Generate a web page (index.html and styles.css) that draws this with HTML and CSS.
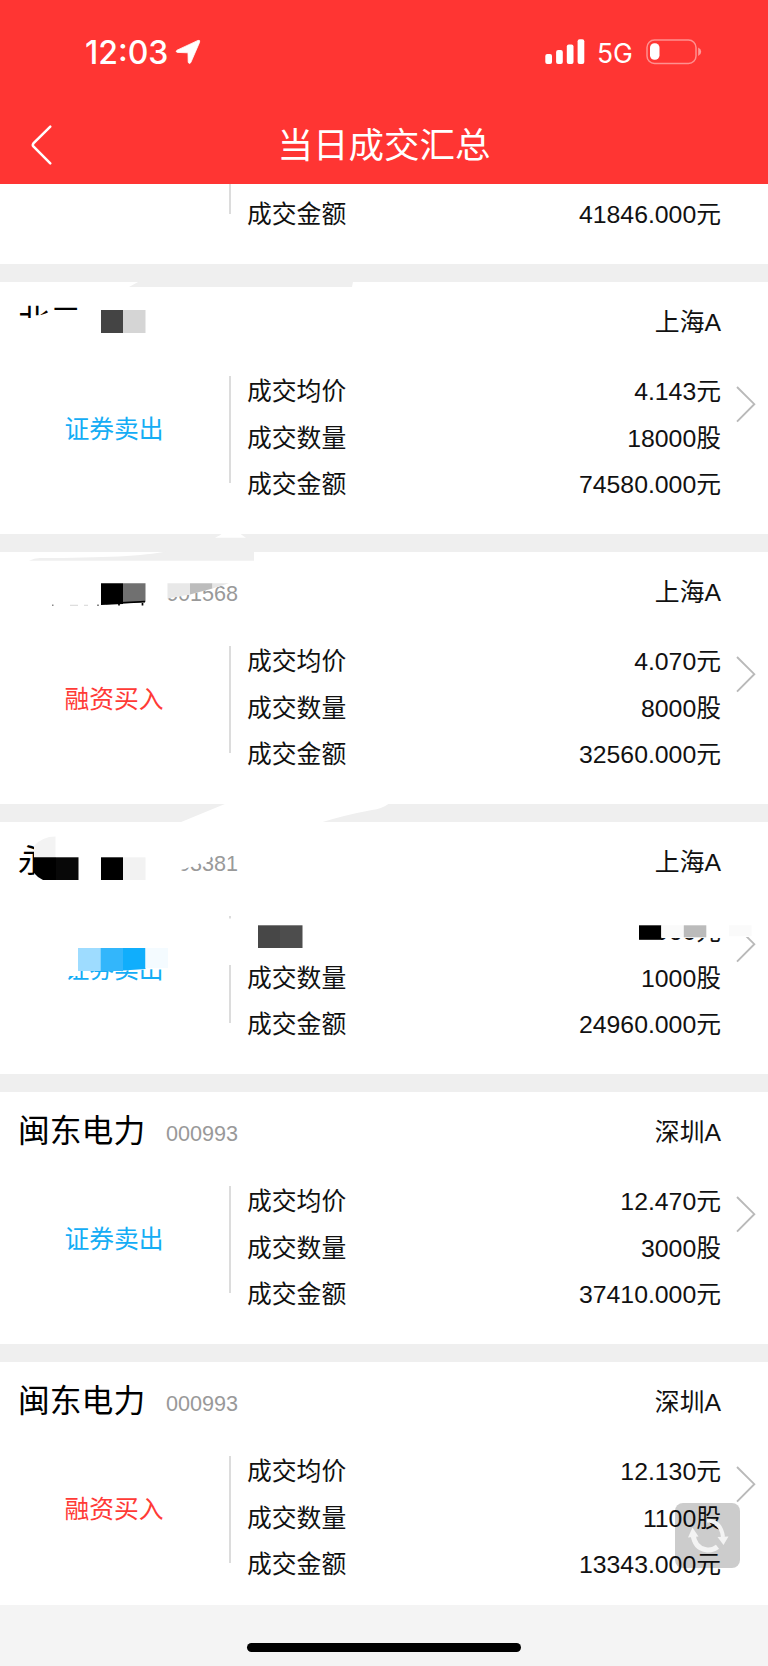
FILE: index.html
```html
<!DOCTYPE html>
<html lang="zh-CN">

<head>
  <meta charset="UTF-8">
  <meta name="viewport" content="width=device-width, initial-scale=1.0">
  <title>当日成交汇总</title>
  <link rel="stylesheet" href="styles.css">
</head>

<body>
  <section class="app">
    <header class="header">
      <div class="status-bar">
        <span class="time">12:03</span>
        <svg class="location" width="26" height="26" viewBox="0 0 26 26">
          <path d="M2 11.2 L23 1.4 Q25.4 .8 24.6 3.2 L15.8 23.6 Q14.4 25.6 13.2 23.4 L13 13.8 L2.4 13.4 Q0 12.6 2 11.2Z" fill="#fff" stroke="#fff" stroke-width=".8" stroke-linejoin="round"/>
        </svg>
        <svg class="signal" width="40" height="26" viewBox="0 0 40 26" fill="#fff">
          <rect x="0.3" y="15" width="6.7" height="10" rx="2"/>
          <rect x="11.1" y="11" width="6.7" height="14" rx="2"/>
          <rect x="21.8" y="5.5" width="6.7" height="19.5" rx="2"/>
          <rect x="32.6" y="0.2" width="6.7" height="24.8" rx="2"/>
        </svg>
        <span class="network">5G</span>
        <svg class="battery" width="56" height="26" viewBox="0 0 56 26">
          <rect x="1" y="1" width="49" height="23.5" rx="7.5" fill="none" stroke="#fff" stroke-opacity=".45" stroke-width="1.5"/>
          <rect x="4" y="4.3" width="9.5" height="16.4" rx="4.5" fill="#fff"/>
          <path d="M52.2 8.5 Q55.2 10 55.2 12.8 Q55.2 15.5 52.2 17Z" fill="#fff" fill-opacity=".5"/>
        </svg>
      </div>
      <div class="nav-bar">
        <svg class="back" width="24" height="42" viewBox="0 0 24 42">
          <path d="M20.3 2.6 L3.4 19.4 Q2.2 21 3.4 22.4 L20.3 39.4" fill="none" stroke="#fff" stroke-width="2.5" stroke-linecap="round"/>
        </svg>
        <h1>当日成交汇总</h1>
      </div>
    </header>

    <main class="list">
      <article class="card scrolled">
        <div class="card-body">
          <div class="action"></div>
          <dl class="details">
            <div class="row"><dt>成交金额</dt><dd>41846.000元</dd></div>
          </dl>
        </div>
      </article>

      <article class="card">
        <div class="card-head">
          <span class="name">北元</span>
          <span class="market">上海A</span>
        </div>
        <div class="card-body">
          <div class="action sell">证券卖出</div>
          <dl class="details">
            <div class="row"><dt>成交均价</dt><dd>4.143元</dd></div>
            <div class="row"><dt>成交数量</dt><dd>18000股</dd></div>
            <div class="row"><dt>成交金额</dt><dd>74580.000元</dd></div>
          </dl>
          <svg class="arrow" width="20" height="37" viewBox="0 0 20 37"><path d="M1 1 L18.3 18.2 L1 35.6"/></svg>
        </div>
        <svg class="mosaic" width="768" height="270" viewBox="0 264 768 270">
          <path d="M129 287 L139 281.5 H353 L352 287Z" fill="#efefef"/>
          <path d="M16 298 H98 V305.5 H16Z M16 318 H31 L33 315.5 L41 315 L47 313 L50 311 H98 V345 H16Z" fill="#fff"/>
          <rect x="101" y="310" width="22" height="23" fill="#444"/>
          <rect x="123" y="310" width="22.5" height="23" fill="#d5d5d5"/>
        </svg>
      </article>

      <article class="card">
        <div class="card-head">
          <span class="name"></span>
          <span class="code">601568</span>
          <span class="market">上海A</span>
        </div>
        <div class="card-body">
          <div class="action buy">融资买入</div>
          <dl class="details">
            <div class="row"><dt>成交均价</dt><dd>4.070元</dd></div>
            <div class="row"><dt>成交数量</dt><dd>8000股</dd></div>
            <div class="row"><dt>成交金额</dt><dd>32560.000元</dd></div>
          </dl>
          <svg class="arrow" width="20" height="37" viewBox="0 0 20 37"><path d="M1 1 L18.3 18.2 L1 35.6"/></svg>
        </div>
        <svg class="mosaic" width="768" height="270" viewBox="0 534 768 270">
          <path d="M215 537.7 Q221 535 222 533.5 H240 Q243 536 246 537.7Z" fill="#fff"/>
          <path d="M29 560.7 Q34 558 40 558 Q135 558 166 551.5 H254 V560.7Z" fill="#efefef"/>
          <path d="M101 583.3 H123 V604 L101 605Z" fill="#000"/>
          <path d="M123 583.3 H145.5 V602 L123 603.5Z" fill="#707070"/>
          <path d="M106 603.5 L145 601.7 M119 603 V605.5 M142.5 603 V605.5" stroke="#000" stroke-width="1.7"/>
          <path d="M52 604.5 H53.5 V606 H52Z M97 604.5 H99 V606 H97Z" fill="#888"/>
          <path d="M70 605.3 H78 M84 605.3 H88" stroke="#ccc" stroke-width=".8"/>
          <path d="M164 580 H230 V583.3 L212.5 588.5 L190 594.5 L167 598.5 H164Z" fill="#fff"/>
          <path d="M167.5 583.3 H190 V594.5 L167.5 598.5Z" fill="#e8e8e8"/>
          <path d="M190 583.3 H212.5 V588.5 L190 594.5Z" fill="#bcbcbc"/>
          <path d="M212.5 583.3 H229 L212.5 588.5Z" fill="#e6e6e6"/>
        </svg>
      </article>

      <article class="card">
        <div class="card-head">
          <span class="name">永</span>
          <span class="code">603381</span>
          <span class="market">上海A</span>
        </div>
        <div class="card-body">
          <div class="action sell">证券卖出</div>
          <dl class="details">
            <div class="row"><dt></dt><dd>24.960元</dd></div>
            <div class="row"><dt>成交数量</dt><dd>1000股</dd></div>
            <div class="row"><dt>成交金额</dt><dd>24960.000元</dd></div>
          </dl>
          <svg class="arrow" width="20" height="37" viewBox="0 0 20 37"><path d="M1 1 L18.3 18.2 L1 35.6"/></svg>
        </div>
        <svg class="mosaic" width="768" height="270" viewBox="0 804 768 270">
          <path d="M180 822.5 L226 803.5 H389 Q382 809 372 810 Q345 815 321 822.5Z" fill="#fff"/>
          <path d="M34 842 L50 835 H60 V885 H44 L34 874Z" fill="#fff"/>
          <path d="M34 857 V846 Q42 836.5 55.5 836.5 V857Z" fill="#f3f3f3"/>
          <path d="M34 857.3 H56 V880 H43 Q37 877 34 873Z" fill="#000"/>
          <rect x="56" y="857.3" width="22.5" height="22.7" fill="#080808"/>
          <rect x="101" y="857.3" width="22" height="22.7" fill="#000"/>
          <rect x="123" y="857.3" width="22.5" height="22.7" fill="#f2f2f2"/>
          <path d="M162 850 H214 L210 859 L206 863 L201 862 L196 866 L190 867 L181 870 V875 H162Z" fill="#fff"/>
          <rect x="227" y="918.5" width="6" height="46.5" fill="#fff"/>
          <rect x="258" y="925.3" width="22" height="22.7" fill="#474747"/>
          <rect x="280" y="925.3" width="22.5" height="22.7" fill="#4d4d4d"/>
          <path d="M60 950 H168 V968.5 L125 970.5 L78 971 V976 H60Z" fill="#fff"/>
          <rect x="78" y="948" width="22.5" height="23" fill="#9edcff"/>
          <rect x="100.5" y="948" width="22.5" height="23" fill="#33b6fb"/>
          <path d="M123 948 H145.5 V969 L123 970.5Z" fill="#10aefc"/>
          <rect x="145.5" y="948" width="22.5" height="20" fill="#f4fbff"/>
          <path d="M612 915 H758 V937 H722 V938 H661 V940 H639 V948 H612Z" fill="#fff"/>
          <rect x="639" y="925.3" width="22.3" height="14.5" fill="#000"/>
          <rect x="661.3" y="925.3" width="22.5" height="12" fill="#fafafa"/>
          <rect x="683.8" y="925.3" width="22.5" height="12" fill="#bbb"/>
          <rect x="729" y="925.3" width="22.5" height="11" fill="#fafafa"/>
        </svg>
      </article>

      <article class="card">
        <div class="card-head">
          <span class="name">闽东电力</span>
          <span class="code">000993</span>
          <span class="market">深圳A</span>
        </div>
        <div class="card-body">
          <div class="action sell">证券卖出</div>
          <dl class="details">
            <div class="row"><dt>成交均价</dt><dd>12.470元</dd></div>
            <div class="row"><dt>成交数量</dt><dd>3000股</dd></div>
            <div class="row"><dt>成交金额</dt><dd>37410.000元</dd></div>
          </dl>
          <svg class="arrow" width="20" height="37" viewBox="0 0 20 37"><path d="M1 1 L18.3 18.2 L1 35.6"/></svg>
        </div>
      </article>

      <article class="card">
        <div class="card-head">
          <span class="name">闽东电力</span>
          <span class="code">000993</span>
          <span class="market">深圳A</span>
        </div>
        <div class="card-body">
          <div class="action buy">融资买入</div>
          <dl class="details">
            <div class="row"><dt>成交均价</dt><dd>12.130元</dd></div>
            <div class="row"><dt>成交数量</dt><dd>1100股</dd></div>
            <div class="row"><dt>成交金额</dt><dd>13343.000元</dd></div>
          </dl>
          <svg class="arrow" width="20" height="37" viewBox="0 0 20 37"><path d="M1 1 L18.3 18.2 L1 35.6"/></svg>
        </div>
      </article>
    </main>

    <button type="button" class="refresh" aria-label="刷新">
      <svg width="65" height="65" viewBox="0 0 65 65">
        <g fill="none" stroke="#f3f3f3">
          <path d="M18 31 Q19.5 45 31 46.8 Q37 48 42.5 43.8" stroke-width="5"/>
          <path d="M32 17.5 Q46 18 48 34" stroke-width="4"/>
        </g>
        <path d="M17.5 24.5 L23.5 33.5 L13 34.5Z M42.5 34 L53.5 33.5 L48.5 42Z" fill="#f3f3f3"/>
      </svg>
    </button>

    <footer class="footer">
      <div class="home-indicator"></div>
    </footer>
  </section>
</body>

</html>
```
FILE: styles.css
```css
body {
  margin: 0;
  background: #f4f4f4;
  color: #111;
  font-family: "Liberation Sans", "Noto Sans CJK SC", sans-serif;
}

.app {
  display: flex;
  flex-direction: column;
  width: 768px;
  height: 1666px;
  position: relative;
  overflow: hidden;
}

.header {
  height: 184px;
  background: #ff3533;
  color: #fff;
}

.status-bar {
  display: flex;
  align-items: center;
  height: 104px;
  padding: 0 66px 0 85px;
  box-sizing: border-box;
  font-family: Inter, sans-serif;
}

.time {
  font-size: 32px;
  font-weight: 500;
  width: 90px;
  white-space: nowrap;
}

.signal {
  margin-left: auto;
}

.network {
  font-size: 26.5px;
  font-weight: 400;
  margin: 2px 0 0 12px;
  width: 49px;
}

.nav-bar {
  display: flex;
  align-items: center;
  height: 80px;
  padding: 0 30px;
}

.back {
  margin-top: 1px;
}

h1 {
  flex: 1;
  margin: 4px 24px 0 0;
  font-size: 35.5px;
  font-weight: 400;
  line-height: 50px;
  text-align: center;
}

.list {
  display: flex;
  flex-direction: column;
  gap: 18px;
  height: 1421px;
  background: #efefef;
  overflow: hidden;
}

.card {
  flex: none;
  height: 252px;
  background: #fff;
  position: relative;
}

.card:last-child {
  height: 243px;
}

.card-head {
  display: flex;
  align-items: center;
  height: 78px;
  padding: 0 47px 0 18px;
}

.name {
  color: #000;
  font-size: 31.8px;
  width: 148px;
  margin-bottom: 6px;
  white-space: nowrap;
}

.code {
  color: #999;
  font-size: 21.6px;
  margin-top: 6px;
}

.market {
  margin-left: auto;
  margin-bottom: 3px;
  font-size: 24.8px;
}

.card-body {
  display: flex;
  padding-top: 8px;
}

.action {
  width: 229px;
  box-sizing: border-box;
  padding: 44px 1px 0 0;
  font-size: 24.8px;
  line-height: 36px;
  text-align: center;
}

.sell {
  color: #14adf5;
}

.buy {
  color: #ff3b36;
}

.details {
  width: 492px;
  height: 107px;
  margin: 8px 0 0;
  padding: 1px 0 0 16px;
  box-sizing: border-box;
  border-left: 2px solid #dcdcdc;
}

.row {
  display: flex;
  justify-content: space-between;
  height: 46.6px;
  line-height: 30px;
  font-size: 24.8px;
}

dd {
  margin: 0;
}

.arrow {
  margin: 18px 0 0 15px;
}

.arrow path {
  fill: none;
  stroke: #b9b9b9;
  stroke-width: 1.9;
}

/* first card is cut off by the header */
.scrolled {
  height: 80px;
}

.scrolled .card-body {
  padding: 0;
}

.scrolled .details {
  height: 30px;
  margin: 0;
}

.scrolled .row {
  padding-top: 15px;
}

.mosaic {
  position: absolute;
  top: -18px;
  left: 0;
}

.refresh {
  position: absolute;
  left: 675px;
  top: 1503px;
  width: 65px;
  height: 65px;
  padding: 0;
  border: 0;
  border-radius: 8px;
  background: rgba(0, 0, 0, 0.2);
}

.refresh svg {
  display: block;
}

.footer {
  flex: 1;
  background: #f4f4f4;
}

.home-indicator {
  width: 274px;
  height: 9px;
  margin: 38px auto 0;
  border-radius: 5px;
  background: #000;
}
```
